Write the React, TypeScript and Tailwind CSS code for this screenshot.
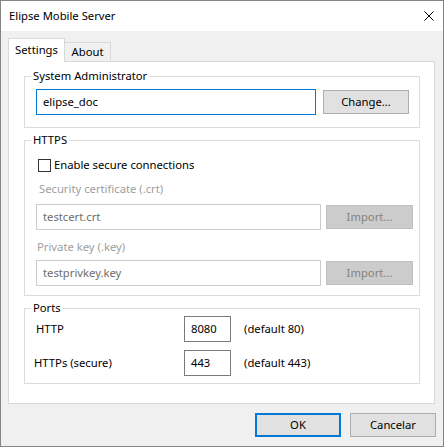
import React from "react";

const GroupBox: React.FC<{ title: string; className?: string; children: React.ReactNode }> = ({
  title,
  className = "",
  children,
}) => {
  return (
    <div className={`border border-[#dcdcdc] ${className}`}>
      <div className="-mt-[9px] ml-[6px] px-[2px] w-fit bg-white leading-[16px]">{title}</div>
      {children}
    </div>
  );
};

const Button: React.FC<{ label: string; className?: string; disabled?: boolean; isDefault?: boolean }> = ({
  label,
  className = "",
  disabled,
  isDefault,
}) => {
  const look = disabled
    ? "bg-[#cccccc] border border-[#bfbfbf] text-[#838383]"
    : isDefault
      ? "bg-[#e1e1e1] border-2 border-[#0078d7] text-black"
      : "bg-[#e1e1e1] border border-[#adadad] text-black";
  return (
    <div className={`h-[24px] w-[86px] flex items-center justify-center leading-none shrink-0 ${look} ${className}`}>
      {label}
    </div>
  );
};

const TextBox: React.FC<{ value: string; className?: string; state?: "focus" | "disabled" | "normal" }> = ({
  value,
  className = "",
  state = "normal",
}) => {
  const look =
    state === "focus"
      ? "border-[#0078d7] text-black"
      : state === "disabled"
        ? "border-[#cccccc] text-[#6d6d6d]"
        : "border-[#7a7a7a] text-black";
  return (
    <div className={`h-[26px] border bg-white flex items-center pl-[6px] shrink-0 ${look} ${className}`}>
      {value}
    </div>
  );
};

const App: React.FC = () => {
  return (
    <div className="w-[444px] h-[447px] border border-[#858585] bg-[#f0f0f0] flex flex-col font-['Noto_Sans',sans-serif] text-[11.25px] text-black overflow-hidden">
      {/* title bar */}
      <div className="h-[30px] shrink-0 bg-white flex items-center justify-between pl-[8px] pr-[9px]">
        <span>Elipse Mobile Server</span>
        <svg width="10" height="10" viewBox="0 0 10 10" className="text-black">
          <path d="M0.5 0.5 L9.5 9.5 M9.5 0.5 L0.5 9.5" stroke="currentColor" strokeWidth="1" />
        </svg>
      </div>

      <div className="pl-[7px] pt-[7px]">
        {/* tabs */}
        <div className="flex items-end h-[23px]">
          <div className="relative z-10 -mb-px h-[24px] w-[57px] border border-b-0 border-[#d9d9d9] bg-white flex items-center justify-center">
            Settings
          </div>
          <div className="-ml-px h-[19px] w-[47px] border border-b-0 border-[#d9d9d9] bg-[#f0f0f0] flex items-center justify-center">
            About
          </div>
        </div>

        {/* tab page */}
        <div className="w-[427px] h-[343px] border border-[#d9d9d9] bg-white pl-[15px] pr-[14px] pt-[14px]">
          <GroupBox title="System Administrator" className="pb-[12px]">
            <div className="mt-[5px] pl-[11px] flex items-center gap-[7px]">
              <TextBox value="elipse_doc" state="focus" className="w-[280px]" />
              <Button label="Change..." />
            </div>
          </GroupBox>

          <GroupBox title="HTTPS" className="mt-[12px] pb-[9px]">
            <div className="mt-[9px] pl-[13px] h-[16px] flex items-center gap-[3px]">
              <div className="w-[13px] h-[13px] border border-[#333333] bg-white" />
              <span>Enable secure connections</span>
            </div>
            <div className="mt-[8px] pl-[14px] leading-[16px] text-[#a0a0a0]">Security certificate (.crt)</div>
            <div className="mt-[7px] pl-[11px] flex items-center gap-[5px]">
              <TextBox value="testcert.crt" state="disabled" className="w-[285px]" />
              <Button label="Import..." disabled className="w-[87px]" />
            </div>
            <div className="mt-[9px] pl-[12px] leading-[16px] text-[#a0a0a0]">Private key (.key)</div>
            <div className="mt-[5px] pl-[11px] flex items-center gap-[5px]">
              <TextBox value="testprivkey.key" state="disabled" className="w-[285px]" />
              <Button label="Import..." disabled className="w-[87px]" />
            </div>
          </GroupBox>

          <GroupBox title="Ports" className="mt-[12px] pb-[7px]">
            <div className="pl-[11px] flex items-center">
              <span className="w-[148px]">HTTP</span>
              <TextBox value="8080" className="w-[47px] pl-[5px]" />
              <span className="ml-[13px]">(default 80)</span>
            </div>
            <div className="mt-[8px] pl-[9px] flex items-center">
              <span className="w-[150px]">HTTPs (secure)</span>
              <TextBox value="443" className="w-[47px] pl-[5px]" />
              <span className="ml-[13px]">(default 443)</span>
            </div>
          </GroupBox>
        </div>
      </div>

      {/* dialog buttons */}
      <div className="mt-[9px] pr-[7px] flex justify-end gap-[9px]">
        <Button label="OK" isDefault />
        <Button label="Cancelar" />
      </div>
    </div>
  );
};

export default App;
